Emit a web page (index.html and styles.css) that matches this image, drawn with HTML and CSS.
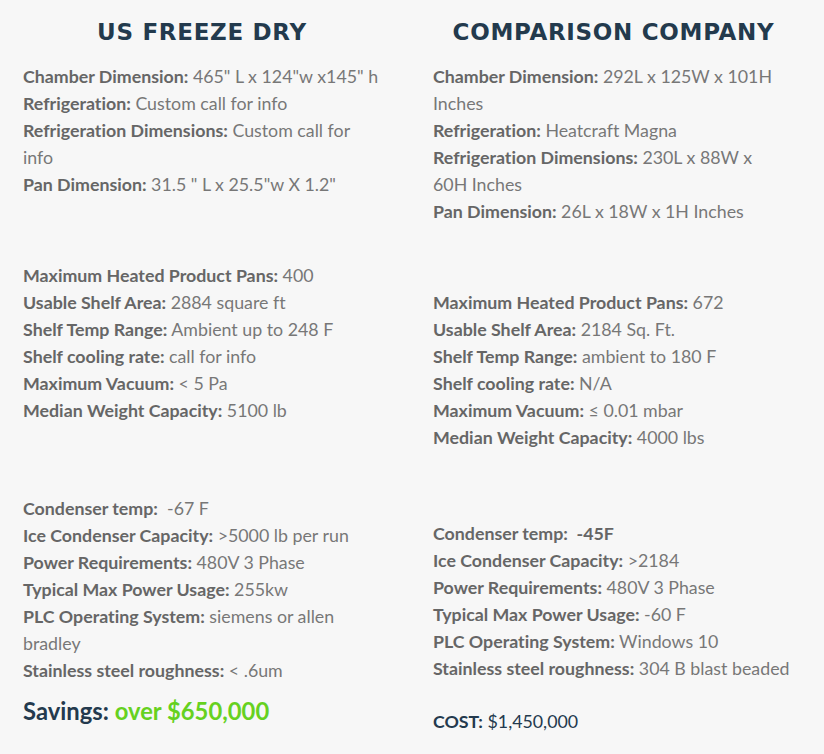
FILE: index.html
```html
<!DOCTYPE html>
<html lang="en">
<head>
<meta charset="utf-8">
<title>US Freeze Dry Comparison</title>
<link rel="stylesheet" href="styles.css">
</head>
<body>
<main class="compare">
  <section class="col col-left">
    <h2 class="title">US FREEZE DRY</h2>
    <p class="block block-1">
      <b>Chamber Dimension:</b> 465" L x 124"w x145" h<br>
      <b>Refrigeration:</b> Custom call for info<br>
      <b>Refrigeration Dimensions:</b> Custom call for info<br>
      <b>Pan Dimension:</b> 31.5 " L x 25.5"w X 1.2"
    </p>
    <p class="block block-2">
      <b>Maximum Heated Product Pans:</b> 400<br>
      <b>Usable Shelf Area:</b> 2884 square ft<br>
      <b>Shelf Temp Range:</b> Ambient up to 248 F<br>
      <b>Shelf cooling rate:</b> call for info<br>
      <b>Maximum Vacuum:</b> &lt; 5 Pa<br>
      <b>Median Weight Capacity:</b> 5100 lb
    </p>
    <p class="block block-3">
      <b>Condenser temp:</b>&nbsp; -67 F<br>
      <b>Ice Condenser Capacity:</b> &gt;5000 lb per run<br>
      <b>Power Requirements:</b> 480V 3 Phase<br>
      <b>Typical Max Power Usage:</b> 255kw<br>
      <b>PLC Operating System:</b> siemens or allen bradley<br>
      <b>Stainless steel roughness:</b> &lt; .6um
    </p>
    <p class="savings">Savings: <span class="green">over $650,000</span></p>
  </section>
  <section class="col col-right">
    <h2 class="title">COMPARISON COMPANY</h2>
    <p class="block block-1">
      <b>Chamber Dimension:</b> 292L x 125W x 101H Inches<br>
      <b>Refrigeration:</b> Heatcraft Magna<br>
      <b>Refrigeration Dimensions:</b> 230L x 88W x 60H Inches<br>
      <b>Pan Dimension:</b> 26L x 18W x 1H Inches
    </p>
    <p class="block block-2">
      <b>Maximum Heated Product Pans:</b> 672<br>
      <b>Usable Shelf Area:</b> 2184 Sq. Ft.<br>
      <b>Shelf Temp Range:</b> ambient to 180 F<br>
      <b>Shelf cooling rate:</b> N/A<br>
      <b>Maximum Vacuum:</b> ≤ 0.01 mbar<br>
      <b>Median Weight Capacity:</b> 4000 lbs
    </p>
    <p class="block block-3 block-3r">
      <b>Condenser temp:&nbsp; -45F</b><br>
      <b>Ice Condenser Capacity:</b> &gt;2184<br>
      <b>Power Requirements:</b> 480V 3 Phase<br>
      <b>Typical Max Power Usage:</b> -60 F<br>
      <b>PLC Operating System:</b> Windows 10<br>
      <b>Stainless steel roughness:</b> 304 B blast beaded
    </p>
    <p class="cost"><b>COST:</b> $1,450,000</p>
  </section>
</main>
</body>
</html>
```

FILE: styles.css
```css
* { box-sizing: border-box; }

html, body {
  margin: 0;
  padding: 0;
  background: #f7f7f7;
}

body {
  font-family: Lato, "Liberation Sans", sans-serif;
  font-size: 17.8px;
  line-height: 27px;
  color: #777777;
  font-variant-ligatures: none;
  font-feature-settings: "liga" 0, "clig" 0;
}

.compare {
  display: grid;
  grid-template-columns: 1fr 1fr;
  width: 824px;
}

.col {
  padding: 14px 31px 0 23px;
  display: flex;
  flex-direction: column;
}

.col-right {
  padding-left: 21px;
  padding-right: 34px;
}

.title {
  margin: 0 0 13px;
  text-align: center;
  font-family: "DejaVu Sans", Inter, sans-serif;
  font-weight: 700;
  font-size: 23px;
  line-height: 36px;
  letter-spacing: 0.7px;
  color: #233a4d;
}

.col-right .title {
  margin-right: -4px;
}

.block {
  margin: 0;
}

.block b {
  font-weight: 700;
  color: #666666;
}

.block-1 { margin-bottom: 64px; }
.block-2 { margin-bottom: 71px; }
.block-3r { margin-top: -2px; }

.savings {
  margin: 12px 0 0;
  font-size: 23.8px;
  line-height: 30px;
  font-weight: 700;
  color: #243a4e;
}

.green { color: #66d11f; }

.cost {
  margin: 26px 0 0;
  color: #243a4e;
}

.cost b { font-weight: 700; }
```
